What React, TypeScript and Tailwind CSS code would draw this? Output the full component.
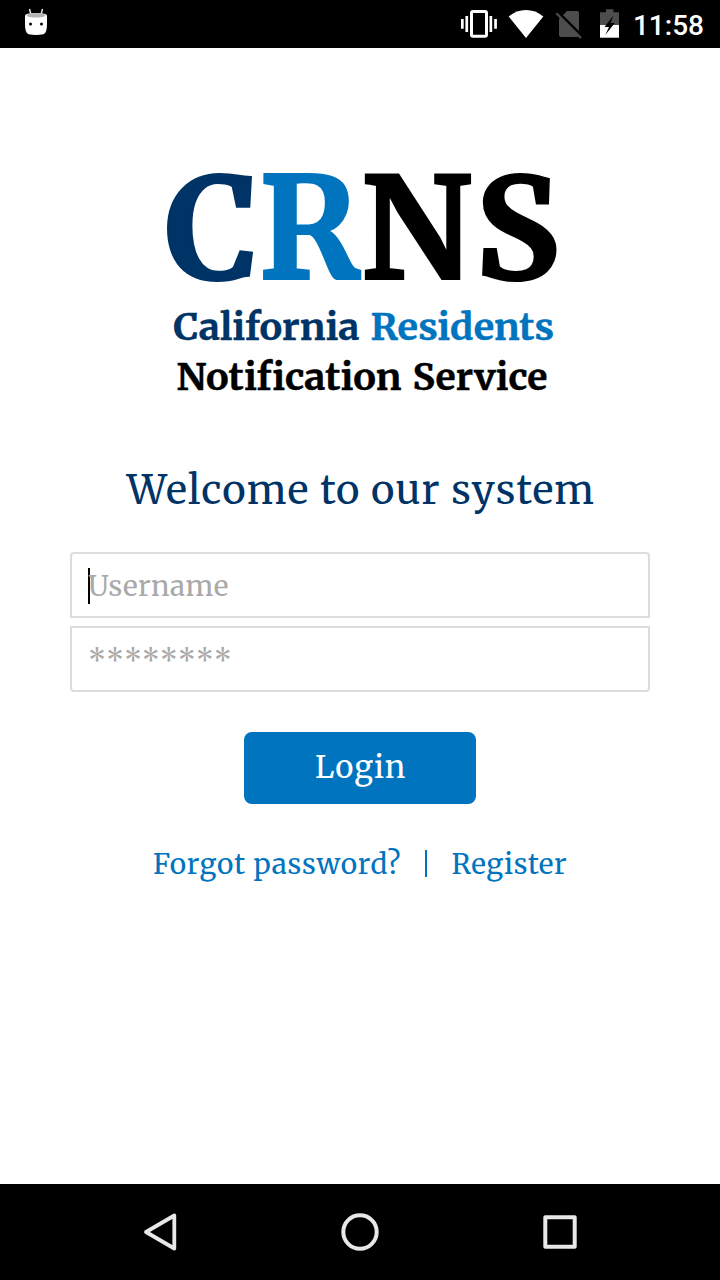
const serif = "font-['Merriweather','DejaVu_Serif_Condensed','DejaVu_Serif',serif]";

function StatusBar() {
  return (
    <header className="flex h-12 shrink-0 items-center justify-between bg-black pr-4 pl-6">
      <svg className="h-12 w-6" viewBox="24 0 24 48" fill="none">
        <path d="M29.500 9l1.200 4.500M42.500 9l-1.200 4.500" stroke="#fff" strokeWidth="1.300" />
        <path d="M25 15.500Q25 13 36 13T47 15.500V24Q47 33 43.500 34.300Q36 35.800 28.500 34.300Q25 33 25 24Z" fill="#fff" />
        <ellipse cx="36" cy="15.300" rx="9.500" ry="2.300" fill="#b5b5b5" />
        <circle cx="30.500" cy="24" r="1.500" fill="#000" />
        <circle cx="41.500" cy="24" r="1.500" fill="#000" />
      </svg>
      <div className="flex items-center">
        <svg className="h-12 w-[160px]" viewBox="460 0 160 48" fill="none">
          <rect x="471.500" y="11.500" width="15" height="24.800" rx="1.500" stroke="#fff" strokeWidth="3" />
          <path d="M461 19h2.700v9.700H461zM465.400 16h2.700v16h-2.700zM489.500 16h2.700v16h-2.700zM494.200 19h2.700v9.700h-2.700z" fill="#fff" />
          <path d="M508.700 16.500C518.500 7.900 533.500 7.900 543.300 16.500L526 37.900Z" fill="#fff" />
          <path d="M567 11h10q2 0 2 2v22q0 2-2 2h-16q-2 0-2-2V19Z" fill="#4d4d4d" />
          <path d="M557.500 11.500L582 36" stroke="#000" strokeWidth="2.500" />
          <path d="M556.300 13.300L581 38" stroke="#4d4d4d" strokeWidth="2.200" />
          <path d="M600 12.300h6V9.200h7.500v3.100h5.500V25h-19z" fill="#4d4d4d" />
          <path d="M600 25h19v12.700h-19z" fill="#fff" />
          <path d="M613.500 15.500L604.500 27H609L605.300 35L614.800 23H610.500Z" fill="#000" />
        </svg>
        <span className="mt-[3px] ml-[13px] font-['Roboto',sans-serif] text-[28px] leading-none font-medium text-white">11:58</span>
      </div>
    </header>
  );
}

function Logo() {
  return (
    <svg
      className={`mt-[112px] h-[240px] w-[400px] shrink-0 overflow-visible font-bold ${serif}`}
      viewBox="160 160 400 240"
      role="img"
      aria-label="California Residents Notification Service"
    >
      <g fontSize="140" strokeWidth="2">
        <text x="165.500" y="279" textLength="93" lengthAdjust="spacingAndGlyphs" fill="#003366" stroke="#003366">C</text>
        <text x="258.500" y="279" textLength="102" lengthAdjust="spacingAndGlyphs" fill="#0074bf" stroke="#0074bf">R</text>
        <text x="361" y="279" textLength="111" lengthAdjust="spacingAndGlyphs" fill="#000" stroke="#000">N</text>
        <text x="475" y="279" textLength="84.500" lengthAdjust="spacingAndGlyphs" fill="#000" stroke="#000">S</text>
      </g>
      <g fontSize="36.500" strokeWidth="0.400">
        <text x="173.500" y="339.500" textLength="186" lengthAdjust="spacingAndGlyphs" fill="#003366" stroke="#003366">California</text>
        <text x="370.500" y="339.500" textLength="183.500" lengthAdjust="spacingAndGlyphs" fill="#0074bf" stroke="#0074bf">Residents</text>
        <text x="176.500" y="389.500" textLength="225" lengthAdjust="spacingAndGlyphs" fill="#000" stroke="#000">Notification</text>
        <text x="412.500" y="389.500" textLength="135" lengthAdjust="spacingAndGlyphs" fill="#000" stroke="#000">Service</text>
      </g>
    </svg>
  );
}

function NavigationBar() {
  return (
    <nav className="flex h-24 shrink-0 items-center justify-center gap-[152px] bg-black">
      <svg className="size-12" viewBox="136 1208 48 48" fill="none" stroke="#e8e8e8" strokeWidth="3.800" strokeLinejoin="round">
        <path d="M146 1232L174.300 1215.500V1248.500Z" />
      </svg>
      <svg className="size-12" viewBox="336 1208 48 48" fill="none" stroke="#e8e8e8" strokeWidth="4">
        <circle cx="360" cy="1232" r="16.700" />
      </svg>
      <svg className="size-12" viewBox="536 1208 48 48" fill="none" stroke="#e8e8e8" strokeWidth="4" strokeLinejoin="round">
        <rect x="545.300" y="1217.300" width="29.400" height="29.400" />
      </svg>
    </nav>
  );
}

export default function App() {
  return (
    <div className={`flex h-[1280px] w-[720px] flex-col overflow-hidden bg-white ${serif}`}>
      <StatusBar />
      <main className="flex flex-1 flex-col items-center">
        <Logo />
        <h1 className="mt-[64px] flex h-[52px] items-center pl-0.5 text-[40px] leading-none tracking-[1.12px] whitespace-nowrap text-[#003366]">Welcome to our system</h1>
        <form className="mt-[36px] flex w-[580px] flex-col items-center" onSubmit={(e) => e.preventDefault()}>
          <div className="flex h-[66px] w-full items-center rounded-t border-2 border-[#dcdcdc] pt-0.5 pl-4 text-[28px] leading-none text-[#a9a9a9]">
            <span className="h-9 w-0.5 bg-black" />
            <span className="-ml-0.5 tracking-[0.45px]">Username</span>
          </div>
          <div className="mt-2 flex h-[66px] w-full items-center rounded-b border-2 border-[#dcdcdc] pt-0.5 pl-4 text-[28px] leading-none text-[#a9a9a9]">
            <span className="tracking-[1.3px]">********</span>
          </div>
          <button className="mt-10 flex h-[72px] w-[232px] items-center justify-center rounded-lg bg-[#0074bf] pb-1 pl-px text-[31px] leading-none tracking-[0.7px] text-white">Login</button>
        </form>
        <div className="mt-[42px] flex h-9 items-center text-[28px] leading-none tracking-[0.8px] whitespace-nowrap text-[#0074bf]">
          <a>Forgot password?</a>
          <span className="mr-6 mb-0.5 ml-6 h-[27px] w-0.5 bg-[#0074bf]" />
          <a className="tracking-[0.5px]">Register</a>
        </div>
      </main>
      <NavigationBar />
    </div>
  );
}
